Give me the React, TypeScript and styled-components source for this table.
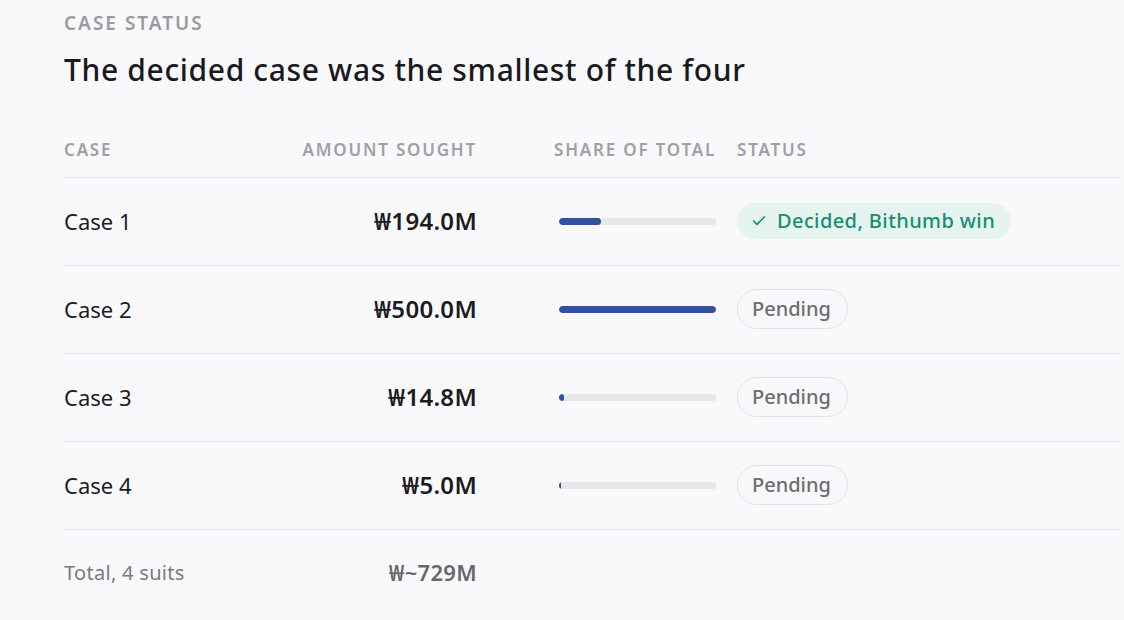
import React from "react";
import styled, { createGlobalStyle } from "styled-components";
import { Check } from "lucide-react";

const Global = createGlobalStyle`
  html, body { margin: 0; padding: 0; background: #f9f9fc; }
  body { font-family: "Noto Sans", "Open Sans", sans-serif; color: #1c1c1f; }
`;

const Page = styled.div`
  padding: 10px 4px 0 64px;
  background: #f9f9fc;
  min-height: 620px;
  box-sizing: border-box;
`;

const Eyebrow = styled.div`
  font-size: 19px;
  line-height: 26px;
  font-weight: 600;
  letter-spacing: 2px;
  color: #9b9a9e;
  text-transform: uppercase;
`;

const Heading = styled.h1`
  margin: 16px 0 0;
  font-size: 30px;
  line-height: 36px;
  font-weight: 500;
  letter-spacing: 0.65px;
  color: #1a1a1e;
`;

const Table = styled.div`
  margin-top: 33px;
  display: grid;
  grid-template-columns: 240px 173px 239px 1fr;
`;

const Row = styled.div<{ $h: number; $border?: boolean }>`
  display: contents;
  & > * {
    box-sizing: border-box;
    height: ${(p) => p.$h}px;
    border-bottom: ${(p) => (p.$border ? "1px solid #e6e6ea" : "none")};
  }
`;

const Cell = styled.div<{ $align?: "start" | "end" }>`
  display: flex;
  align-items: center;
  white-space: nowrap;
  justify-content: ${(p) => (p.$align === "end" ? "flex-end" : "flex-start")};
`;

const StatusCell = styled(Cell)`
  padding-left: 21px;
`;

const HeadText = styled.span`
  font-size: 17px;
  font-weight: 600;
  letter-spacing: 1.8px;
  color: #a09fa4;
  text-transform: uppercase;
  white-space: nowrap;
`;

const CaseName = styled.span`
  font-size: 22px;
  color: #1c1c1f;
  margin-top: -2px;
`;

const Amount = styled.span`
  font-size: 24px;
  font-weight: 600;
  letter-spacing: 0.3px;
  color: #1c1c1f;
  margin-top: -2px;
`;

const Track = styled.div`
  width: 157px;
  height: 7px;
  border-radius: 4px;
  background: #e7e7ea;
  overflow: hidden;
`;

const Fill = styled.div`
  height: 100%;
  border-radius: 4px;
  background: #33509f;
`;

const Pill = styled.span<{ $kind: "won" | "pending" }>`
  display: inline-flex;
  align-items: center;
  gap: 10px;
  box-sizing: border-box;
  font-size: 20px;
  font-weight: 500;
  border-radius: 20px;
  margin-top: -2px;
  ${(p) =>
    p.$kind === "won"
      ? `height: 36px; padding: 0 16px 0 14px; background: #e6f4ef; color: #168e74; letter-spacing: 0.4px;`
      : `height: 40px; padding: 0 16px 0 14px; border: 1.5px solid #e3e3e7; color: #6d6d72;`}
`;

const TotalLabel = styled.span`
  font-size: 20px;
  letter-spacing: 0.3px;
  color: #7a7a7f;
`;

const TotalAmount = styled.span`
  font-size: 22px;
  font-weight: 600;
  letter-spacing: 0.3px;
  color: #67676c;
`;

type Item = { name: string; amount: string; share: number; won?: boolean };

const items: Item[] = [
  { name: "Case 1", amount: "₩194.0M", share: 26.5, won: true },
  { name: "Case 2", amount: "₩500.0M", share: 100 },
  { name: "Case 3", amount: "₩14.8M", share: 3.2 },
  { name: "Case 4", amount: "₩5.0M", share: 1.2 },
];

export default function App() {
  return (
    <>
      <Global />
      <Page>
        <Eyebrow>Case status</Eyebrow>
        <Heading>The decided case was the smallest of the four</Heading>
        <Table>
          <Row $h={57} $border>
            <Cell><HeadText>Case</HeadText></Cell>
            <Cell $align="end"><HeadText>Amount sought</HeadText></Cell>
            <Cell $align="end"><HeadText>Share of total</HeadText></Cell>
            <StatusCell><HeadText>Status</HeadText></StatusCell>
          </Row>
          {items.map((it) => (
            <Row key={it.name} $h={88} $border>
              <Cell><CaseName>{it.name}</CaseName></Cell>
              <Cell $align="end"><Amount>{it.amount}</Amount></Cell>
              <Cell $align="end">
                <Track>
                  <Fill style={{ width: `${it.share}%` }} />
                </Track>
              </Cell>
              <StatusCell>
                {it.won ? (
                  <Pill $kind="won">
                    <Check size={16} strokeWidth={2.5} />
                    Decided, Bithumb win
                  </Pill>
                ) : (
                  <Pill $kind="pending">Pending</Pill>
                )}
              </StatusCell>
            </Row>
          ))}
          <Row $h={84}>
            <Cell><TotalLabel>Total, 4 suits</TotalLabel></Cell>
            <Cell $align="end"><TotalAmount>₩~729M</TotalAmount></Cell>
            <Cell />
            <StatusCell />
          </Row>
        </Table>
      </Page>
    </>
  );
}
